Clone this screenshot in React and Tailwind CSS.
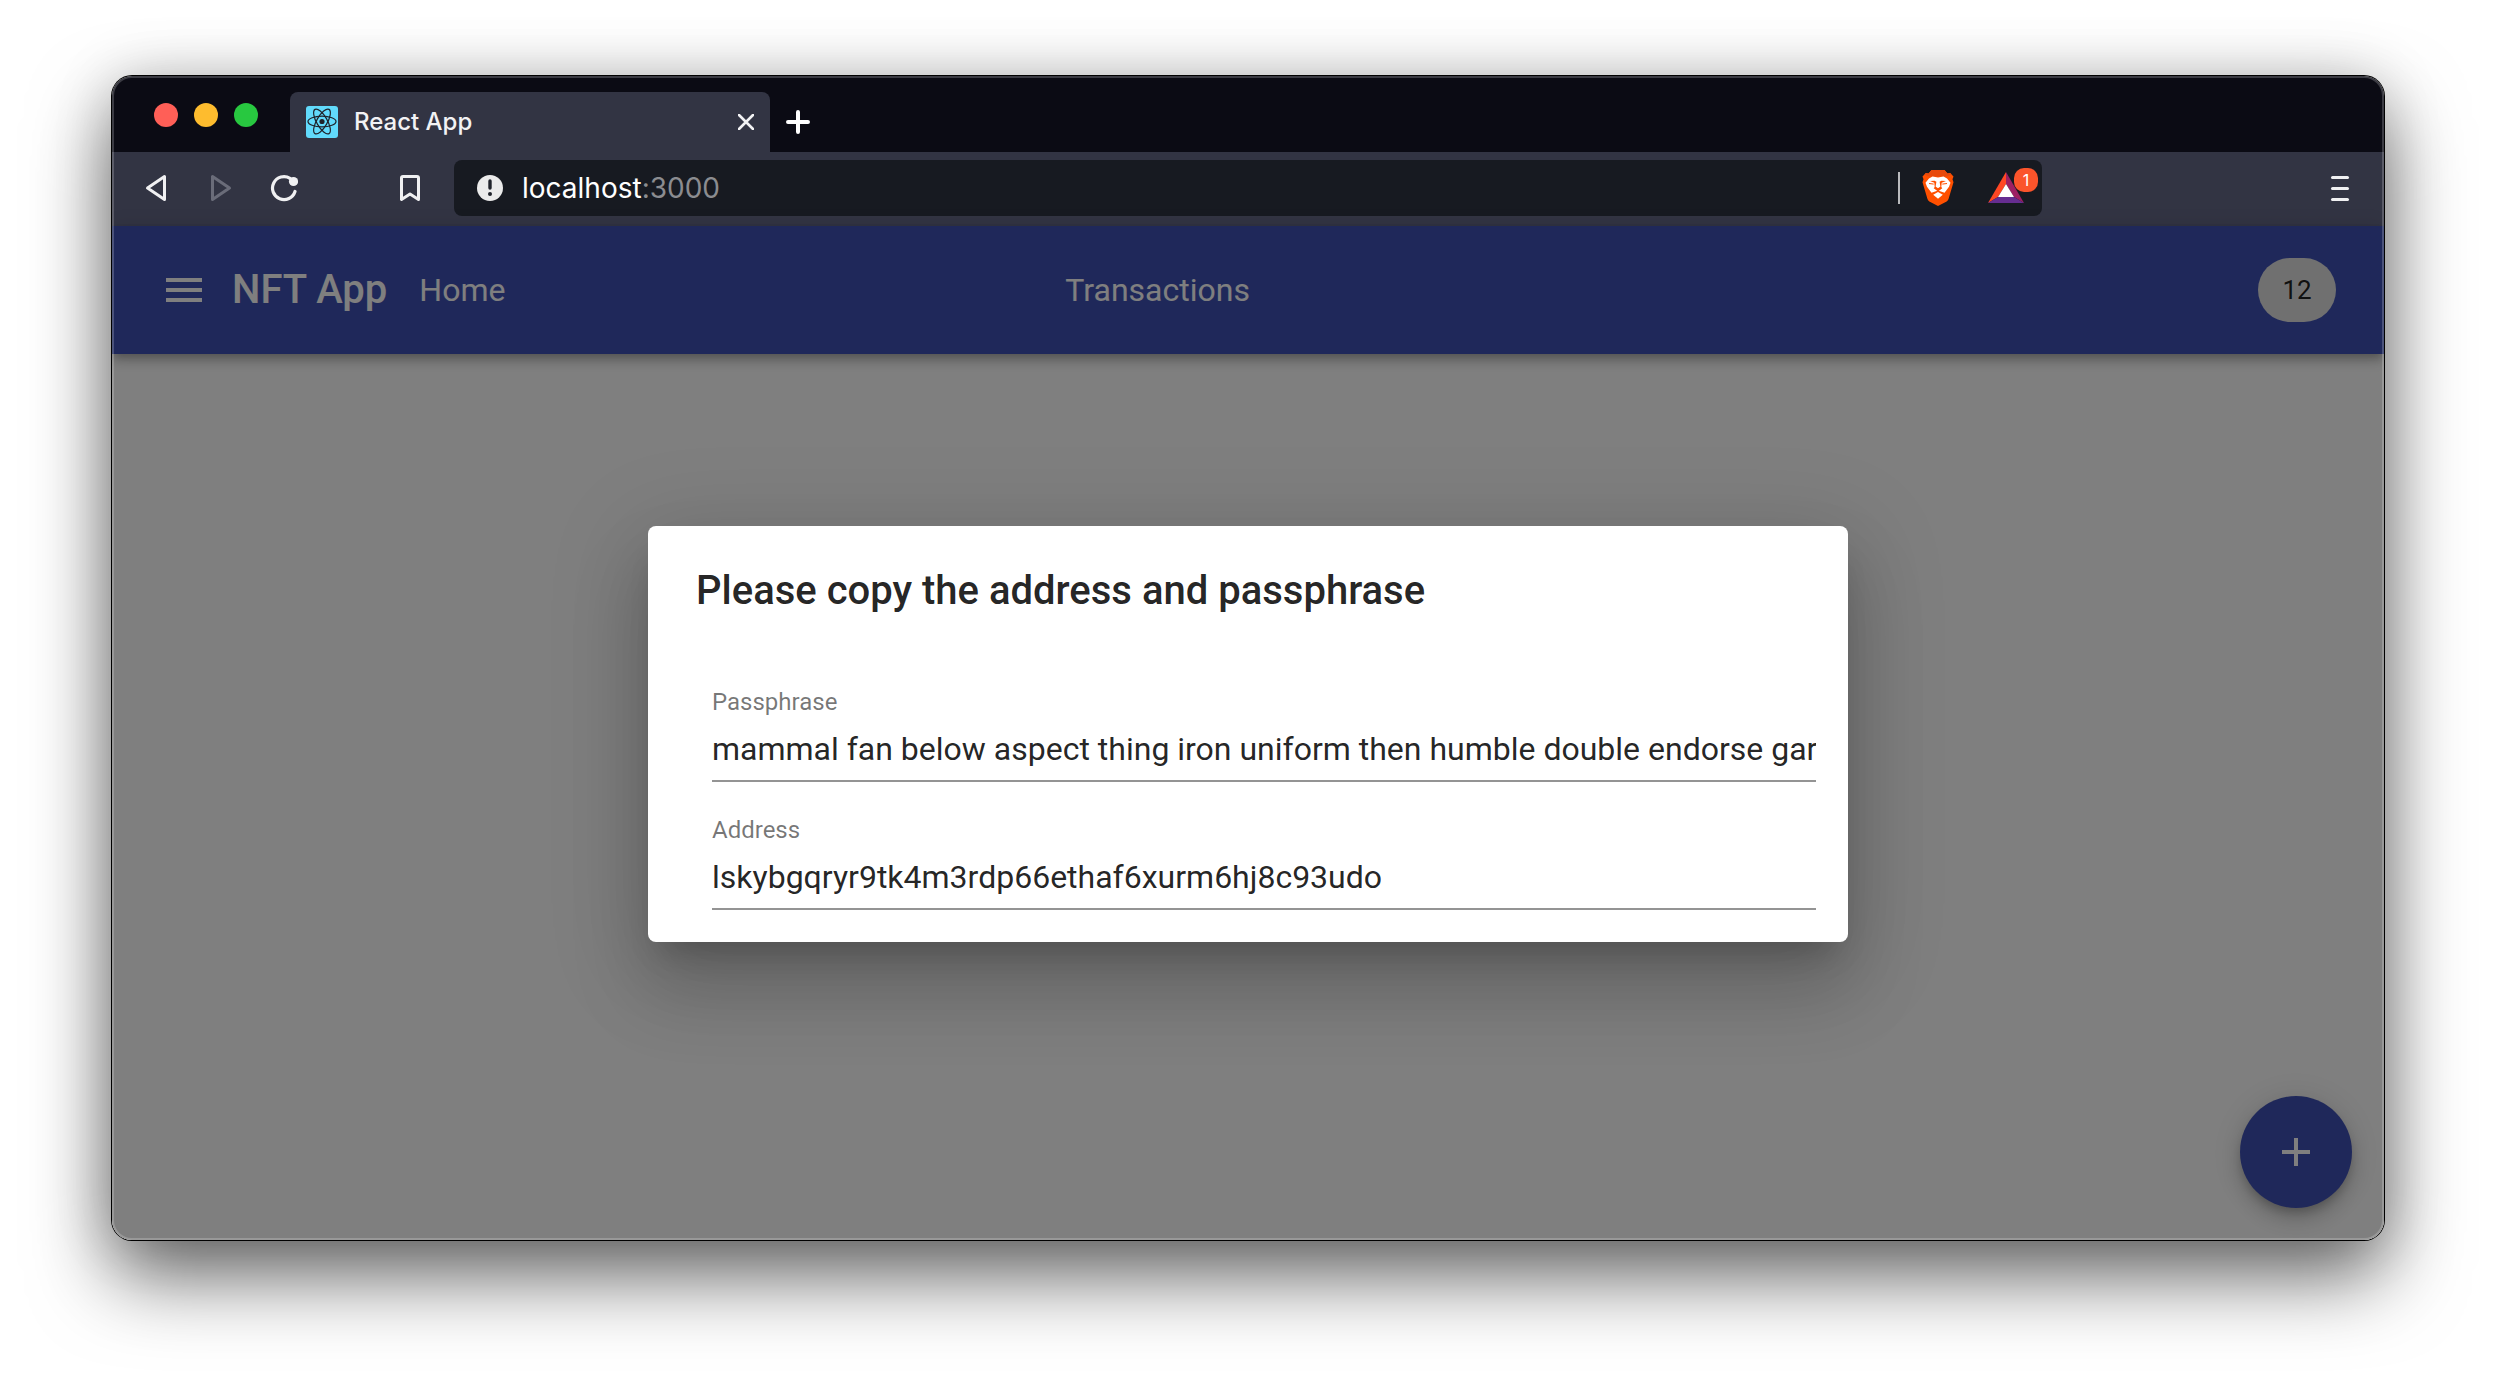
import { useState } from "react";

function ReactLogo() {
  return (
    <svg viewBox="0 0 32 32" className="size-8 shrink-0" aria-hidden="true">
      <rect width="32" height="32" rx="3" fill="#61dafb" />
      <g fill="none" stroke="#20232a" strokeWidth="1.2">
        <ellipse cx="16" cy="15.5" rx="14" ry="5.3" />
        <ellipse cx="16" cy="15.5" rx="14" ry="5.3" transform="rotate(60 16 15.5)" />
        <ellipse cx="16" cy="15.5" rx="14" ry="5.3" transform="rotate(120 16 15.5)" />
      </g>
      <circle cx="16" cy="15.5" r="2.6" fill="#20232a" />
    </svg>
  );
}

function BraveLogo() {
  return (
    <svg viewBox="0 0 32 36" className="h-9 w-8" aria-hidden="true">
      <path d="M9.5 0h13l3 3.4 2.6-.4 3.4 3.6-1 2.6 1 3-4.8 16.3c-.6 1.900-1.600 2.700-3 3.600L16 36l-7.700-3.900c-1.400-.9-2.400-1.700-3-3.600L.5 12.200l1-3-1-2.600L3.900 3l2.600.4z" fill="#ff5000" />
      <path d="M9.500 0h13l3 3.400 2.600-.4 1.500 1.600L25 6.500H7L2.400 4.600 3.900 3l2.600.4z" fill="#e84a0c" />
      <path d="M10.500 6.500L16 7.500l5.500-1 3.500 2 3.500 4.200-1.500 4-4.500 6L16 20.500 9.500 22.700l-4.500-6-1.500-4L7 8.500z" fill="#fff" />
      <path d="M8 11l4.600-.3 1.800 1-.8 4.800 2.400 1.700 2.400-1.700-.8-4.800 1.800-1L24 11l-4.300 1.700-.4 4.200 1 1.300-4.300 3.300-4.300-3.300 1-1.300-.4-4.200z" fill="#ff5000" />
      <path d="M7 13.500l4.700.6M25 13.500l-4.700.6" stroke="#ff5000" strokeWidth="1" />
      <path d="M16 22l4.800 2.800L16 28.800l-4.800-4z" fill="#fff" />
    </svg>
  );
}

function RewardsLogo() {
  return (
    <svg viewBox="0 0 36 32" className="h-8 w-9" aria-hidden="true">
      <path d="M18 0L0 31l10-6 8-13z" fill="#ff4724" />
      <path d="M18 0l18 31-10-6-8-13z" fill="#9e1f63" />
      <path d="M0 31h36l-10-6H10z" fill="#662d91" />
      <path d="M18 12l8 13H10z" fill="#fff" />
    </svg>
  );
}

function TabStrip() {
  return (
    <div className="flex h-[76px] items-end bg-[#0b0b14] pt-0.5">
      <div className="flex items-center gap-4 self-center pl-[42px] pr-8">
        <button aria-label="Close window" className="size-6 rounded-full bg-[#ff5f57]" />
        <button aria-label="Minimize window" className="size-6 rounded-full bg-[#febc2e]" />
        <button aria-label="Zoom window" className="size-6 rounded-full bg-[#28c840]" />
      </div>
      <div className="flex h-[60px] w-[480px] items-center gap-4 rounded-t-lg bg-[#323443] px-4">
        <ReactLogo />
        <span className="grow font-[Inter] text-2xl font-medium text-[#f2f2f4]">React App</span>
        <button aria-label="Close tab">
          <svg viewBox="0 0 16 16" className="size-4" fill="none" stroke="#f2f2f4" strokeWidth="2.6" strokeLinecap="round">
            <path d="M1 1l14 14M15 1L1 15" />
          </svg>
        </button>
      </div>
      <button aria-label="New tab" className="flex h-[60px] items-center px-4">
        <svg viewBox="0 0 24 24" className="size-6" fill="none" stroke="#fff" strokeWidth="4" strokeLinecap="round">
          <path d="M12 2v20M2 12h20" />
        </svg>
      </button>
    </div>
  );
}

function Toolbar() {
  return (
    <div className="flex h-[74px] items-center bg-[#323443] pb-0.5 pl-8 pr-[35px] text-[#f0f0f2]">
      <button aria-label="Back" className="w-16">
        <svg viewBox="0 0 28 28" className="size-7" fill="none" stroke="currentColor" strokeWidth="3" strokeLinejoin="round">
          <path d="M20.500 2.500v23L3.500 14z" />
        </svg>
      </button>
      <button aria-label="Forward" className="w-[62px] text-[#6a6c79]" disabled>
        <svg viewBox="0 0 28 28" className="size-7" fill="none" stroke="currentColor" strokeWidth="3" strokeLinejoin="round">
          <path d="M4.500 2.500v23L21.500 14z" />
        </svg>
      </button>
      <button aria-label="Reload" className="w-32">
        <svg viewBox="0 0 28 28" className="size-7" fill="none" stroke="currentColor" strokeWidth="3.2" strokeLinecap="round">
          <path d="M20 4.300A11.500 11.500 0 1 0 25 17.500" />
          <circle cx="23.5" cy="7.5" r="4.6" fill="currentColor" stroke="none" />
        </svg>
      </button>
      <button aria-label="Bookmark" className="w-14">
        <svg viewBox="0 0 24 28" className="h-7 w-6" fill="none" stroke="currentColor" strokeWidth="3" strokeLinejoin="round">
          <path d="M5 2.500h14a1.500 1.500 0 0 1 1.500 1.500v21.500L12 20l-8.500 5.500V4A1.500 1.500 0 0 1 5 2.500z" />
        </svg>
      </button>
      <div className="flex h-14 w-[1588px] min-w-0 items-center rounded-lg bg-[#171a21] pl-[22px] pr-1">
        <svg viewBox="0 0 28 28" className="size-7 shrink-0" aria-hidden="true">
          <circle cx="14" cy="14" r="13" fill="#ebebeb" />
          <path d="M14 7v7" stroke="#20232b" strokeWidth="3.4" strokeLinecap="round" />
          <circle cx="14" cy="20" r="2" fill="#20232b" />
        </svg>
        <a href="#address" className="grow pl-[18px] font-[Inter] text-[28px] leading-9 text-white">
          localhost<span className="text-[#8b8c90]">:3000</span>
        </a>
        <span className="h-8 w-0.5 bg-[#b9babd]" />
        <button aria-label="Brave Shields" className="px-[22px]">
          <BraveLogo />
        </button>
        <button aria-label="Brave Rewards" className="relative w-[62px] pl-3">
          <RewardsLogo />
          <span className="absolute -top-1 right-0 flex size-6 items-center justify-center rounded-[10px] bg-[#fb542b] font-[Inter] text-base text-white">
            1
          </span>
        </button>
      </div>
      <button aria-label="Browser menu" className="ml-auto flex w-[18px] flex-col gap-2">
        <span className="h-[3px] rounded-full bg-current" />
        <span className="h-[3px] rounded-full bg-current" />
        <span className="h-[3px] rounded-full bg-current" />
      </button>
    </div>
  );
}

function AppBar() {
  return (
    <header className="relative flex h-32 items-center bg-[#3f51b5] px-12 text-white shadow-[0_4px_8px_-2px_rgba(0,0,0,0.2),0_8px_10px_rgba(0,0,0,0.14),0_2px_20px_rgba(0,0,0,0.12)]">
      <button aria-label="Menu" className="mr-6">
        <svg viewBox="0 0 24 24" className="size-12" fill="currentColor">
          <path d="M3 18h18v-2H3v2zm0-5h18v-2H3v2zm0-7v2h18V6H3z" />
        </svg>
      </button>
      <h1 className="text-[40px] font-medium leading-[66px]">NFT App</h1>
      <nav className="ml-8 flex grow text-[32px] leading-10">
        <a href="#home" className="w-[646px]">Home</a>
        <a href="#transactions">Transactions</a>
      </nav>
      <span className="flex h-16 min-w-[78px] items-center justify-center rounded-full bg-[#e0e0e0] px-6 text-[26px] text-black/87">
        12
      </span>
    </header>
  );
}

function Field({ id, label, initial }) {
  const [value, setValue] = useState(initial);
  return (
    <div className="flex h-24 flex-col justify-between border-b-2 border-[#949494]">
      <label htmlFor={id} className="text-2xl leading-8 text-black/54">{label}</label>
      <input
        id={id}
        value={value}
        onChange={(e) => setValue(e.target.value)}
        className="mb-3 h-[38px] w-full bg-transparent text-[32px] text-black/87 outline-none"
      />
    </div>
  );
}

export default function App() {
  return (
    <div className="flex min-h-screen flex-col bg-white px-28 pt-[76px] pb-[148px] font-[Roboto,sans-serif]">
      <div className="relative flex grow flex-col overflow-hidden rounded-[20px] bg-white shadow-[0_0_0_1px_#000,0_36px_80px_rgba(0,0,0,0.6),0_0_60px_rgba(0,0,0,0.15)]">
        <TabStrip />
        <Toolbar />
        <div className="relative flex grow flex-col bg-white">
          <AppBar />
          <main className="flex grow items-end justify-end p-8">
            <button
              aria-label="Add"
              className="flex size-28 items-center justify-center rounded-full bg-[#3f51b5] text-white shadow-[0_6px_10px_-2px_rgba(0,0,0,0.2),0_12px_20px_rgba(0,0,0,0.14),0_2px_36px_rgba(0,0,0,0.12)]"
            >
              <svg viewBox="0 0 24 24" className="size-12" fill="currentColor">
                <path d="M19 13h-6v6h-2v-6H5v-2h6V5h2v6h6v2z" />
              </svg>
            </button>
          </main>
          <div className="absolute inset-0 flex items-center justify-center bg-black/50 pt-0.5">
            <section
              role="dialog"
              aria-labelledby="dialog-title"
              className="w-full max-w-[1200px] rounded-lg bg-white shadow-[0_22px_30px_-14px_rgba(0,0,0,0.2),0_48px_76px_6px_rgba(0,0,0,0.14),0_18px_92px_16px_rgba(0,0,0,0.12)]"
            >
              <h2 id="dialog-title" className="px-12 pt-8 pb-[30px] text-[40px] font-medium leading-[66px] text-black/87">
                Please copy the address and passphrase
              </h2>
              <form className="flex flex-col gap-8 py-8 pl-16 pr-8">
                <Field
                  id="passphrase"
                  label="Passphrase"
                  initial="mammal fan below aspect thing iron uniform then humble double endorse garlic"
                />
                <Field id="address" label="Address" initial="lskybgqryr9tk4m3rdp66ethaf6xurm6hj8c93udo" />
              </form>
            </section>
          </div>
        </div>
        <div className="pointer-events-none absolute inset-0 rounded-[20px] border-2 border-white/20" />
      </div>
    </div>
  );
}
